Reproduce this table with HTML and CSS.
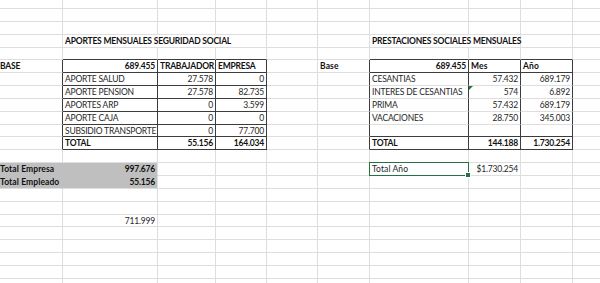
FILE: index.html
```html
<!DOCTYPE html>
<html lang="es">
<head>
<meta charset="utf-8">
<title>Aportes y prestaciones</title>
<link rel="stylesheet" href="styles.css">
</head>
<body>
<div class="sheet">
  <!-- row 0 -->
  <div class="c"></div><div class="c"></div><div class="c"></div><div class="c"></div><div class="c"></div><div class="c"></div><div class="c"></div><div class="c"></div><div class="c"></div><div class="c"></div>
  <!-- row 1 -->
  <div class="c"></div><div class="c"></div><div class="c"></div><div class="c"></div><div class="c"></div><div class="c"></div><div class="c"></div><div class="c"></div><div class="c"></div><div class="c"></div>
  <!-- row 2 -->
  <div class="c"></div><div class="c"></div><div class="c"></div><div class="c"></div><div class="c"></div><div class="c"></div><div class="c"></div><div class="c"></div><div class="c"></div><div class="c"></div>
  <!-- row 3: titles -->
  <div class="c"></div><div class="c b title3">APORTES MENSUALES SEGURIDAD SOCIAL</div><div class="c"></div><div class="c"></div><div class="c b title2">PRESTACIONES SOCIALES MENSUALES</div><div class="c"></div><div class="c"></div>
  <!-- row 4 -->
  <div class="c"></div><div class="c db"></div><div class="c db"></div><div class="c db"></div><div class="c"></div><div class="c"></div><div class="c db"></div><div class="c db"></div><div class="c db"></div><div class="c"></div>
  <!-- row 5: headers -->
  <div class="c b dr">BASE</div><div class="c b r db dr">689.455</div><div class="c b db dr">TRABAJADOR</div><div class="c b db dr">EMPRESA</div><div class="c"></div><div class="c b lc dr">Base</div><div class="c b r db dr">689.455</div><div class="c b lc db dr">Mes</div><div class="c b lc db dr">Año</div><div class="c"></div>
  <!-- row 6 -->
  <div class="c dr"></div><div class="c db dr">APORTE SALUD</div><div class="c r db dr">27.578</div><div class="c r db dr">0</div><div class="c"></div><div class="c dr"></div><div class="c dr">CESANTIAS</div><div class="c r dr">57.432</div><div class="c r dr">689.179</div><div class="c"></div>
  <!-- row 7 -->
  <div class="c dr"></div><div class="c db dr">APORTE PENSION</div><div class="c r db dr">27.578</div><div class="c r db dr">82.735</div><div class="c"></div><div class="c dr"></div><div class="c dr">INTERES DE CESANTIAS</div><div class="c r dr flag">574</div><div class="c r dr">6.892</div><div class="c"></div>
  <!-- row 8 -->
  <div class="c dr"></div><div class="c db dr">APORTES ARP</div><div class="c r db dr">0</div><div class="c r db dr">3.599</div><div class="c"></div><div class="c dr"></div><div class="c dr">PRIMA</div><div class="c r dr">57.432</div><div class="c r dr">689.179</div><div class="c"></div>
  <!-- row 9 -->
  <div class="c dr"></div><div class="c db dr">APORTE CAJA</div><div class="c r db dr">0</div><div class="c r db dr">0</div><div class="c"></div><div class="c dr"></div><div class="c dr">VACACIONES</div><div class="c r dr">28.750</div><div class="c r dr">345.003</div><div class="c"></div>
  <!-- row 10 -->
  <div class="c dr"></div><div class="c db dr">SUBSIDIO TRANSPORTE</div><div class="c r db dr">0</div><div class="c r db dr">77.700</div><div class="c"></div><div class="c dr"></div><div class="c db dr"></div><div class="c db dr"></div><div class="c db dr"></div><div class="c"></div>
  <!-- row 11 -->
  <div class="c dr"></div><div class="c b db dr">TOTAL</div><div class="c b r db dr">55.156</div><div class="c b r db dr">164.034</div><div class="c"></div><div class="c dr"></div><div class="c b db dr">TOTAL</div><div class="c b r db dr">144.188</div><div class="c b r db dr">1.730.254</div><div class="c"></div>
  <!-- row 12 -->
  <div class="c"></div><div class="c"></div><div class="c"></div><div class="c"></div><div class="c"></div><div class="c"></div><div class="c"></div><div class="c"></div><div class="c"></div><div class="c"></div>
  <!-- row 13 -->
  <div class="c b lc fill fill-in">Total Empresa</div><div class="c b r fill fill-end">997.676</div><div class="c"></div><div class="c"></div><div class="c"></div><div class="c"></div><div class="c lc selected">Total Año</div><div class="c r">$1.730.254</div><div class="c"></div><div class="c"></div>
  <!-- row 14 -->
  <div class="c b lc fill fill-bot">Total Empleado</div><div class="c b r fill">55.156</div><div class="c"></div><div class="c"></div><div class="c"></div><div class="c"></div><div class="c"></div><div class="c"></div><div class="c"></div><div class="c"></div>
  <!-- row 15 -->
  <div class="c"></div><div class="c"></div><div class="c"></div><div class="c"></div><div class="c"></div><div class="c"></div><div class="c"></div><div class="c"></div><div class="c"></div><div class="c"></div>
  <!-- row 16 -->
  <div class="c"></div><div class="c"></div><div class="c"></div><div class="c"></div><div class="c"></div><div class="c"></div><div class="c"></div><div class="c"></div><div class="c"></div><div class="c"></div>
  <!-- row 17 -->
  <div class="c"></div><div class="c r">711.999</div><div class="c"></div><div class="c"></div><div class="c"></div><div class="c"></div><div class="c"></div><div class="c"></div><div class="c"></div><div class="c"></div>
  <!-- rows 18-22 -->
  <div class="c"></div><div class="c"></div><div class="c"></div><div class="c"></div><div class="c"></div><div class="c"></div><div class="c"></div><div class="c"></div><div class="c"></div><div class="c"></div>
  <div class="c"></div><div class="c"></div><div class="c"></div><div class="c"></div><div class="c"></div><div class="c"></div><div class="c"></div><div class="c"></div><div class="c"></div><div class="c"></div>
  <div class="c"></div><div class="c"></div><div class="c"></div><div class="c"></div><div class="c"></div><div class="c"></div><div class="c"></div><div class="c"></div><div class="c"></div><div class="c"></div>
  <div class="c"></div><div class="c"></div><div class="c"></div><div class="c"></div><div class="c"></div><div class="c"></div><div class="c"></div><div class="c"></div><div class="c"></div><div class="c"></div>
  <div class="c"></div><div class="c"></div><div class="c"></div><div class="c"></div><div class="c"></div><div class="c"></div><div class="c"></div><div class="c"></div><div class="c"></div><div class="c"></div>
</div>
</body>
</html>
```

FILE: styles.css
```css
html, body {
  margin: 0;
  padding: 0;
  background: #ffffff;
  overflow: hidden;
}

.sheet {
  display: grid;
  grid-template-columns: 65px 95px 58px 51px 51px 52px 99px 52px 52px 29px;
  grid-template-rows: 9px;
  grid-auto-rows: 12.857px;
  margin-left: -2px;
  font-family: Lato, "Liberation Sans", sans-serif;
  font-size: 8.5px;
  letter-spacing: -0.2px;
  color: #262626;
}

.c {
  box-sizing: border-box;
  border-right: 1px solid #dedede;
  border-bottom: 1px solid #dedede;
  padding: 0 2px;
  white-space: nowrap;
  line-height: 13px;
  position: relative;
}

.r { text-align: right; }
.b { font-weight: 700; color: #111; }
.lc { letter-spacing: 0.1px; }

.title3 { grid-column: span 3; }
.title2 { grid-column: span 2; overflow: visible; }

.db { border-bottom-color: #3c3c3c; }
.dr { border-right-color: #3c3c3c; }

.fill { background: #bfbfbf; }
.fill-in { border-right-color: #bfbfbf; border-bottom-color: #bfbfbf; }
.fill-end { border-bottom-color: #bfbfbf; }
.fill-bot { border-right-color: #bfbfbf; }

.flag::before {
  content: "";
  position: absolute;
  left: 0;
  top: 0;
  border-top: 4px solid #1e7a3c;
  border-right: 4px solid transparent;
}

.selected::after {
  content: "";
  position: absolute;
  left: -1px;
  top: -1px;
  right: -1px;
  bottom: -1px;
  border: 1.5px solid #217346;
}

.selected::before {
  content: "";
  position: absolute;
  right: -3px;
  bottom: -3px;
  width: 4px;
  height: 4px;
  background: #217346;
  border: 1px solid #ffffff;
  z-index: 1;
}
```
